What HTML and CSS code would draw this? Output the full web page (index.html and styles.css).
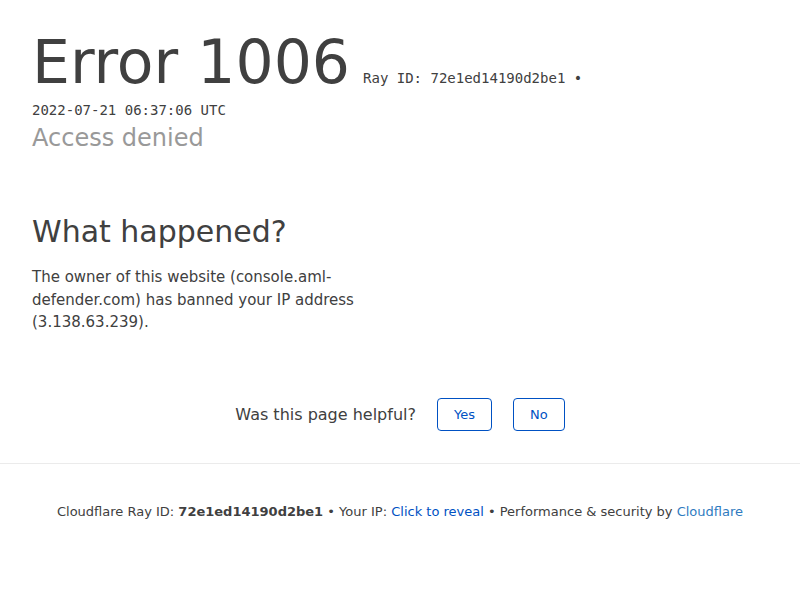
FILE: index.html
```html
<!DOCTYPE html>
<html lang="en">
<head>
<meta charset="utf-8">
<title>Access denied | Cloudflare</title>
<link rel="stylesheet" href="styles.css">
</head>
<body>
<div class="wrapper">
  <header class="overview">
    <h1 class="title"><span>Error</span> <span>1006</span><small class="ray">Ray ID: 72e1ed14190d2be1 &bull;</small></h1>
    <div class="date">2022-07-21 06:37:06 UTC</div>
    <h2 class="subhead">Access denied</h2>
  </header>
  <section class="details">
    <div class="column">
      <h2 class="section-title">What happened?</h2>
      <p class="desc">The owner of this website (console.aml-defender.com) has banned your IP address (3.138.63.239).</p>
    </div>
  </section>
  <div class="feedback">
    <span class="feedback-q">Was this page helpful?</span>
    <button class="fb-btn" type="button">Yes</button>
    <button class="fb-btn" type="button">No</button>
  </div>
  <footer class="footer">
    <p>Cloudflare Ray ID: <strong>72e1ed14190d2be1</strong> &bull; Your IP: <button class="reveal" type="button">Click to reveal</button> &bull; Performance &amp; security by <a class="cf-link" href="#">Cloudflare</a></p>
  </footer>
</div>
</body>
</html>
```
FILE: styles.css
```css
* { box-sizing: border-box; }
html, body { margin: 0; padding: 0; background: #fff; }
body {
  font-family: "DejaVu Sans", "Noto Sans", sans-serif;
  color: #404040;
}
.overview { padding: 26px 32px 0; }
.title {
  margin: 0;
  font-size: 60px;
  line-height: 72px;
  font-weight: normal;
  color: #404040;
  white-space: nowrap;
}
.ray {
  font-family: "DejaVu Sans Mono", monospace;
  font-size: 14px;
  line-height: 14px;
  margin-left: 13px;
  color: #404040;
}
.date {
  font-family: "DejaVu Sans Mono", monospace;
  font-size: 14px;
  line-height: 20px;
  margin-top: 2px;
}
.subhead {
  margin: 3px 0 0;
  font-size: 24px;
  line-height: 30px;
  font-weight: normal;
  color: #999;
}
.details { padding: 61px 32px 0; }
.column { width: 368px; }
.section-title {
  margin: 0;
  font-size: 30px;
  line-height: 36px;
  font-weight: normal;
  color: #404040;
}
.desc {
  margin: 16px 0 0;
  font-size: 15px;
  line-height: 22.5px;
}
.feedback {
  display: flex;
  justify-content: center;
  align-items: center;
  margin-top: 64px;
  height: 33px;
}
.feedback-q { font-size: 16px; margin-right: 21px; color: #404040; }
.fb-btn {
  font-family: "DejaVu Sans", sans-serif;
  font-size: 13px;
  color: #0051c3;
  background: #fff;
  border: 1px solid #0051c3;
  border-radius: 4px;
  height: 33px;
  padding: 0 16px;
  margin-right: 21px;
}
.fb-btn:last-child { margin-right: 0; }
.footer {
  margin-top: 32px;
  border-top: 1px solid #ebebeb;
  padding-top: 38px;
  text-align: center;
}
.footer p { margin: 0; font-size: 13px; line-height: 19.5px; }
.footer strong { font-weight: bold; }
.reveal {
  font-family: inherit;
  font-size: 13px;
  color: #0051c3;
  background: none;
  border: 0;
  padding: 0;
}
.cf-link { color: #2f7bbf; text-decoration: none; }
```
